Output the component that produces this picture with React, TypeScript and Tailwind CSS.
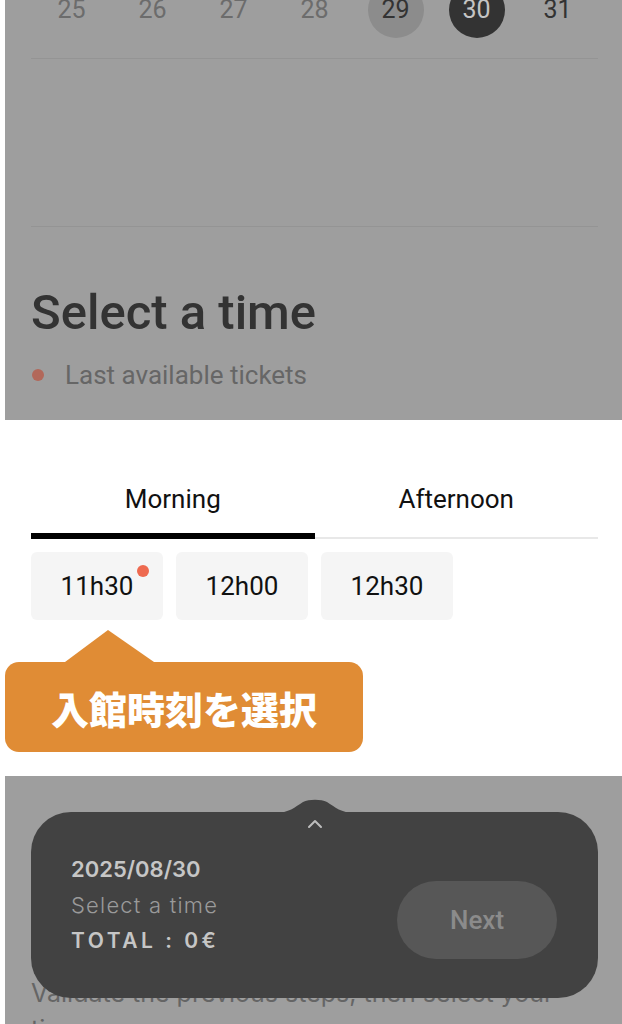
import { ChevronUp } from 'lucide-react'

const days = [
    { n: 25, state: 'off' },
    { n: 26, state: 'off' },
    { n: 27, state: 'off' },
    { n: 28, state: 'off' },
    { n: 29, state: 'today' },
    { n: 30, state: 'selected' },
    { n: 31, state: 'on' },
]

const times = ['11h30', '12h00', '12h30']

export default function App() {
    return (
        <div className="relative w-[622px] h-[1024px] overflow-hidden bg-white font-['Roboto',sans-serif]">
            {/* Dimmed upper page */}
            <section className="flow-root ml-[5px] h-[420px] bg-[#9e9e9e] pl-[26px] pr-[24px]">
                <div className="grid grid-cols-7 -mt-[18px] pb-[20px] border-b border-[#949494]">
                    {days.map((d) => (
                        <div key={d.n} className="flex justify-center">
                            <div
                                className={
                                    'w-[56px] h-[56px] rounded-full flex items-center justify-center text-[25px] ' +
                                    (d.state === 'selected'
                                        ? 'bg-[#333333] text-[#c4c4c4]'
                                        : d.state === 'today'
                                          ? 'bg-[#8c8c8c] text-[#333333]'
                                          : d.state === 'on'
                                            ? 'text-[#333333]'
                                            : 'text-[#6c6c6c]')
                                }
                            >
                                {d.n}
                            </div>
                        </div>
                    ))}
                </div>
                <div className="h-[168px] border-b border-[#949494]" />
                <h2 className="mt-[60px] text-[49px] leading-[52px] font-medium text-[#333333]">Select a time</h2>
                <div className="mt-[21px] flex items-center gap-[21px]">
                    <span className="w-[12px] h-[12px] rounded-full bg-[#b2685a] ml-px" />
                    <span className="text-[26px] leading-[30px] text-[#666666]">Last available tickets</span>
                </div>
            </section>

            {/* Highlighted time picker */}
            <section className="relative h-[356px] bg-white pr-[24px] pl-[31px]">
                <div className="flex pt-[62px] border-b-2 border-[#e8e8e8]">
                    <button className="w-1/2 h-[57px] -mb-[2px] border-b-[6px] border-black text-[26px] leading-[34px] pb-[17px] text-[#111111]">
                        Morning
                    </button>
                    <button className="w-1/2 h-[55px] text-[26px] leading-[34px] pb-[21px] text-[#111111]">
                        Afternoon
                    </button>
                </div>
                <div className="mt-[13px] flex gap-[13px]">
                    {times.map((t, i) => (
                        <button
                            key={t}
                            className="relative w-[132px] h-[68px] rounded-[6px] bg-[#f5f5f5] text-[26px] text-[#111111]"
                        >
                            {t}
                            {i === 0 && (
                                <span className="absolute top-[13px] left-[106px] w-[12px] h-[12px] rounded-full bg-[#ee6a50]" />
                            )}
                        </button>
                    ))}
                </div>

                {/* Coach mark */}
                <div className="absolute left-[5px] top-[210px] w-[358px]">
                    <svg width="90" height="32" viewBox="0 0 90 32" className="ml-[60px] block">
                        <polygon points="0,32 43,0 89,32" fill="#e08c35" />
                    </svg>
                    <div className="h-[90px] rounded-[14px] bg-[#e08c35] flex items-center justify-center text-white text-[38px] font-black font-['Noto_Sans_CJK_JP',sans-serif]">
                        入館時刻を選択
                    </div>
                </div>
            </section>

            {/* Dimmed lower page */}
            <section className="ml-[5px] h-[248px] bg-[#9e9e9e] pl-[26px] pr-[24px] pt-[199px]">
                <p className="text-[25px] leading-[36px] text-[#656565] font-['Inter',sans-serif]">
                    Validate the previous steps, then select your time.
                </p>
            </section>

            {/* Summary bar */}
            <div className="absolute left-[31px] top-[799px] w-[567px]">
                <svg width="80" height="14" viewBox="0 0 80 14" className="block mx-auto -mb-px">
                    <path d="M0 14 C14 14 20 8 28 3 C34 0 46 0 52 3 C60 8 66 14 80 14 Z" fill="#424242" />
                </svg>
                <div className="h-[186px] rounded-[40px] bg-[#424242] relative flex items-start pl-[40px] pr-[41px]">
                    <ChevronUp className="absolute left-1/2 -translate-x-1/2 top-[0px] text-[#bdbdbd]" size={24} strokeWidth={2} />
                    <div className="flex-1 flex flex-col gap-[6px] font-['Inter',sans-serif] pt-[42px]">
                        <span className="text-[22px] leading-[30px] font-semibold text-[#c6c6c6]">2025/08/30</span>
                        <span className="text-[22px] leading-[30px] font-light text-[#9a9a9a] tracking-[1.2px]">Select a time</span>
                        <span className="text-[21px] leading-[30px] font-semibold text-[#c6c6c6] tracking-[3.5px]">TOTAL : 0€</span>
                    </div>
                    <button className="mt-[69px] w-[160px] h-[78px] rounded-full bg-[#575757] text-[26px] font-medium text-[#8b8b8b]">
                        Next
                    </button>
                </div>
            </div>
        </div>
    )
}
